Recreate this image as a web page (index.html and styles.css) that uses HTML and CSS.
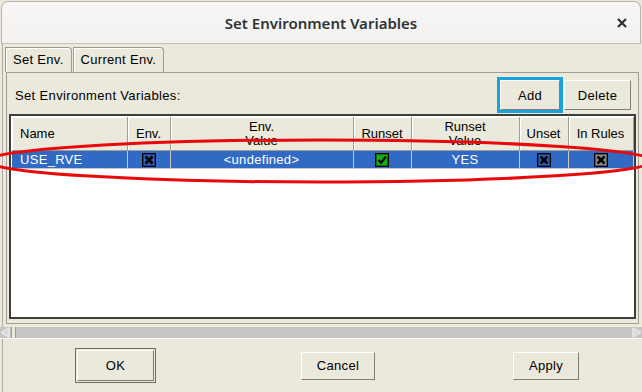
FILE: index.html
```html
<!DOCTYPE html>
<html lang="en">
<head>
    <meta charset="UTF-8">
    <title>Set Environment Variables</title>
    <link rel="stylesheet" href="styles.css">
</head>
<body>

<div class="window">
    <div class="titlebar">
        <span></span>
        <span class="title">Set Environment Variables</span>
        <span class="close">
            <svg width="10" height="10" viewBox="0 0 10 10"><path d="M1 1L9 9M9 1L1 9" stroke="#2e3436" stroke-width="2.2"/></svg>
        </span>
    </div>

    <div class="content">
        <div class="tabs">
            <div class="tab active">Set Env.</div>
            <div class="tab">Current Env.</div>
        </div>

        <div class="panel">
            <div class="toolbar">
                <span class="label">Set Environment Variables:</span>
                <button class="btn add">Add</button>
                <button class="btn delete">Delete</button>
            </div>

            <div class="table-frame">
                <table class="vars">
                    <colgroup>
                        <col style="width:115px">
                        <col style="width:43px">
                        <col style="width:183px">
                        <col style="width:58px">
                        <col style="width:108px">
                        <col style="width:49px">
                        <col style="width:65px">
                    </colgroup>
                    <thead>
                        <tr>
                            <th class="left">Name</th>
                            <th>Env.</th>
                            <th>Env.<br>Value</th>
                            <th>Runset</th>
                            <th>Runset<br>Value</th>
                            <th>Unset</th>
                            <th>In Rules</th>
                        </tr>
                    </thead>
                    <tbody>
                        <tr class="selected">
                            <td class="left">USE_RVE</td>
                            <td>
                                <svg class="check" viewBox="0 0 14 14"><rect x="0.5" y="0.5" width="13" height="13" fill="#2d5fb4" stroke="#000"/><rect x="1.5" y="1.5" width="11" height="11" fill="none" stroke="#1b3d78"/><path d="M3.5 3.5L10.5 10.5M10.5 3.5L3.5 10.5" stroke="#000" stroke-width="2.6"/></svg>
                            </td>
                            <td>&lt;undefined&gt;</td>
                            <td>
                                <svg class="check" viewBox="0 0 14 14"><rect x="0.5" y="0.5" width="13" height="13" fill="#12b012" stroke="#000"/><rect x="1.5" y="1.5" width="11" height="11" fill="none" stroke="#0a6e0a"/><path d="M3.5 7L6 9.8L10.8 3.8" fill="none" stroke="#000" stroke-width="2.2"/></svg>
                            </td>
                            <td>YES</td>
                            <td>
                                <svg class="check" viewBox="0 0 14 14"><rect x="0.5" y="0.5" width="13" height="13" fill="#2d5fb4" stroke="#000"/><rect x="1.5" y="1.5" width="11" height="11" fill="none" stroke="#1b3d78"/><path d="M3.5 3.5L10.5 10.5M10.5 3.5L3.5 10.5" stroke="#000" stroke-width="2.6"/></svg>
                            </td>
                            <td>
                                <svg class="check" viewBox="0 0 14 14"><rect x="0.5" y="0.5" width="13" height="13" fill="#8a8a8a" stroke="#000"/><rect x="1.5" y="1.5" width="11" height="11" fill="none" stroke="#555"/><path d="M3.5 3.5L10.5 10.5M10.5 3.5L3.5 10.5" stroke="#000" stroke-width="2.6"/></svg>
                            </td>
                        </tr>
                    </tbody>
                </table>
            </div>
        </div>

        <!-- horizontal scrollbar -->
        <div class="hscroll">
            <svg class="arrow" width="10" height="11" viewBox="0 0 10 11"><path d="M9 1L1 5.5L9 10Z" fill="#d8d8d8" stroke="#f4f4f4"/></svg>
            <span class="thumb"></span>
            <span class="track"></span>
            <svg class="arrow" width="10" height="11" viewBox="0 0 10 11"><path d="M1 1L9 5.5L1 10Z" fill="#d8d8d8" stroke="#f4f4f4"/></svg>
        </div>

        <div class="buttons">
            <button class="btn ok">OK</button>
            <button class="btn cancel">Cancel</button>
            <button class="btn apply">Apply</button>
        </div>
    </div>

    <!-- red annotation ellipse -->
    <svg class="annotation" width="642" height="392" viewBox="0 0 642 392">
        <ellipse cx="320" cy="160" rx="333" ry="21" fill="none" stroke="#e80a0a" stroke-width="3"/>
    </svg>
</div>

</body>
</html>
```

FILE: styles.css
```css
body {
    margin: 0;
    width: 642px;
    height: 392px;
    overflow: hidden;
    background-color: #ebe8dc;
    font-family: "Liberation Sans", Arial, sans-serif;
    font-size: 13px;
    color: #000;
}

.window {
    position: relative;
    height: 392px;
}

.titlebar {
    display: grid;
    grid-template-columns: 1fr auto 1fr;
    align-items: center;
    height: 41px;
    margin: 1px 1px 0 1px;
    border: 1px solid #b9b6b0;
    border-bottom-color: #c4c1ba;
    border-radius: 7px 7px 0 0;
    background: linear-gradient(#f8f7f6, #f2f1ef);
}

.title {
    font-family: "Noto Sans", sans-serif;
    font-weight: 600;
    font-size: 15px;
    color: #2e3436;
}

.close {
    justify-self: end;
    padding-right: 13px;
    display: flex;
}

.content {
    border-left: 1px solid #b0ada4;
    margin-left: 2px;
}

.tabs {
    display: flex;
    padding: 3px 0 0 2px;
    height: 25px;
}

.tab {
    height: 24px;
    line-height: 24px;
    padding: 0 7px;
    letter-spacing: 0.3px;
    border: 1px solid #9d9a91;
    border-bottom: none;
    border-radius: 0 4px 0 0;
    box-shadow: inset 1px 1px 0 #fff;
}

.tab + .tab {
    margin-left: 1px;
}

.panel {
    height: 250px;
    margin: 0 3px 0 3px;
    padding: 0 2px;
    border: 1px solid #a19e95;
}

.toolbar {
    display: flex;
    align-items: center;
    padding: 7px 5px 0 6px;
    height: 30px;
}

.label {
    flex: 1;
    letter-spacing: 0.35px;
}

.btn {
    font-family: inherit;
    font-size: 13px;
    height: 30px;
    padding: 0;
    background-color: #ebe8dc;
    border: 1px solid;
    border-color: #fff #7f7d76 #7f7d76 #fff;
    color: #000;
    letter-spacing: 0.3px;
}

.add {
    width: 60px;
    margin-right: 4px;
    outline: 3px solid #1aa2dc;
}

.delete {
    width: 67px;
}

.table-frame {
    margin-top: 4px;
    height: 199px;
    border: 2px solid #3d3d3b;
    padding: 1px;
    background-color: #fff;
}

.vars {
    width: 621px;
    table-layout: fixed;
    border-collapse: collapse;
}

.vars th {
    height: 33px;
    padding: 0;
    font-weight: normal;
    line-height: 14px;
    background-color: #ebe8dc;
    border-right: 1px solid #a09d94;
    border-bottom: 1px solid #a09d94;
    box-shadow: inset 1px 1px 0 #fff;
}

.vars td {
    height: 17px;
    padding: 0;
    text-align: center;
    color: #fff;
    letter-spacing: 0.3px;
    border-right: 1px solid #c9c7c1;
    border-bottom: 1px solid #c9c7c1;
}

.vars .left {
    text-align: left;
    padding-left: 8px;
}

.selected td {
    background-color: #316ac5;
}

.check {
    display: block;
    width: 14px;
    height: 14px;
    margin: 0 auto;
}

.hscroll {
    display: flex;
    margin: 3px 0 0 -3px;
    height: 11px;
    background-color: #c6c6c6;
    border-bottom: 1px solid #fff;
}

.thumb {
    width: 3px;
    margin-left: 1px;
    background-color: #ebe8dc;
    border: 1px solid #a09d94;
    border-top: none;
    border-bottom: none;
}

.track {
    flex: 1;
}

.buttons {
    display: flex;
    align-items: center;
    height: 53px;
}

.ok {
    width: 77px;
    height: 31px;
    margin-left: 74px;
    box-shadow: 0 0 0 1px #ebe8dc, 0 0 0 2px #6e6c66;
}

.cancel {
    width: 74px;
    height: 28px;
    margin-left: 147px;
}

.apply {
    width: 66px;
    height: 28px;
    margin-left: 138px;
}

.annotation {
    position: absolute;
    top: 0;
    left: 0;
    pointer-events: none;
}
```
